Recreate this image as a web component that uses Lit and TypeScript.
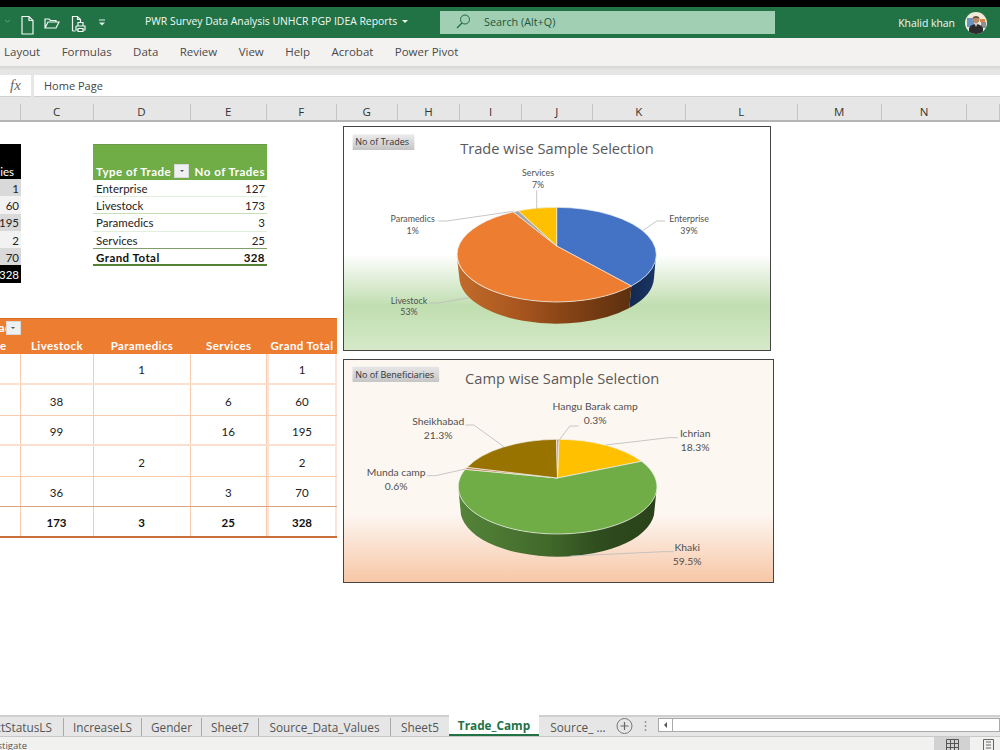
import { LitElement, html, css, svg } from "lit";
import { customElement } from "lit/decorators.js";

type Label = { x: number; l1: number; t1: string; l2: number; t2: string };

const cols: [string, number][] = [
  ["", 20.5], ["C", 73], ["D", 97], ["E", 76.5], ["F", 69.5], ["G", 61.5], ["H", 62], ["I", 62],
  ["J", 70.5], ["K", 93.5], ["L", 111.5], ["M", 84.5], ["N", 85], ["", 33],
];

const black = ["1", "60", "195", "2", "70"];
const trades: [string, string][] = [["Enterprise", "127"], ["Livestock", "173"], ["Paramedics", "3"], ["Services", "25"]];
const cross: string[][] = [
  ["", "", "1", "", "1"],
  ["", "38", "", "6", "60"],
  ["", "99", "", "16", "195"],
  ["", "", "2", "", "2"],
  ["", "36", "", "3", "70"],
];
const rowH = [31, 31, 30, 31, 30];

function labels(list: Label[]) {
  return list.map(
    (l) => svg`<text class="lbl" x=${l.x} y=${l.l1} text-anchor="middle">${l.t1}</text>
      <text class="lbl" x=${l.x} y=${l.l2} text-anchor="middle">${l.t2}</text>`
  );
}

const tradeChart = html`<svg class="chart-svg" viewBox="9 12 1284 675" width="428" height="225">
  <defs>
    <linearGradient id="ow" x1="350" x2="874" y1="0" y2="0" gradientUnits="userSpaceOnUse">
      <stop offset="0" stop-color="#c26c2b"/><stop offset="0.35" stop-color="#a9561f"/>
      <stop offset="0.6" stop-color="#8a4516"/><stop offset="1" stop-color="#5c300f"/>
    </linearGradient>
    <linearGradient id="bw" x1="874" x2="948" y1="0" y2="0" gradientUnits="userSpaceOnUse">
      <stop offset="0" stop-color="#13294f"/><stop offset="1" stop-color="#1a3566"/>
    </linearGradient>
    <linearGradient id="btn1" x1="0" x2="0" y1="0" y2="1">
      <stop offset="0" stop-color="#ececec"/><stop offset="1" stop-color="#c4c4c4"/>
    </linearGradient>
  </defs>
  <path class="wall" fill="url(#bw)" d="M948 398A299 142 0 0 1 874 492L868 558A292 140 0 0 0 942 468Z"/>
  <path class="wall" fill="url(#ow)" d="M874 492A299 142 0 0 1 350 398L358 468A292 140 0 0 0 868 558Z"/>
  <path class="top" fill="#4472c4" d="M650 372L650 256A299 142 0 0 1 874 492Z"/>
  <path class="top" fill="#ed7d31" d="M650 372L874 492A299 142 0 1 1 520 270Z"/>
  <path class="top" fill="#a5a5a5" d="M650 372L520 270A299 142 0 0 1 535 266Z"/>
  <path class="top" fill="#ffc000" d="M650 372L535 266A299 142 0 0 1 650 256Z"/>
  <path class="lead" d="M590 205V262M295 297H320L520 268M975 297H950L910 325M268 543H295L388 527"/>
  ${labels([
    { x: 594, l1: 163, t1: "Services", l2: 198, t2: "7%" },
    { x: 218, l1: 300, t1: "Paramedics", l2: 335, t2: "1%" },
    { x: 1047, l1: 300, t1: "Enterprise", l2: 335, t2: "39%" },
    { x: 207, l1: 545, t1: "Livestock", l2: 580, t2: "53%" },
  ])}
  <text class="ttl" x="651" y="95" text-anchor="middle">Trade wise Sample Selection</text>
  <rect x="38" y="37" width="185" height="47" fill="url(#btn1)"/>
  <text class="btn" x="46" y="70">No of Trades</text>
</svg>`;

const campChart = html`<svg class="chart-svg" viewBox="7.5 12 1293 672" width="431" height="224">
  <defs>
    <linearGradient id="gw" x1="355" x2="950" y1="0" y2="0" gradientUnits="userSpaceOnUse">
      <stop offset="0" stop-color="#55843a"/><stop offset="0.45" stop-color="#41692a"/>
      <stop offset="0.7" stop-color="#2f4d1e"/><stop offset="1" stop-color="#2a4119"/>
    </linearGradient>
    <linearGradient id="btn2" x1="0" x2="0" y1="0" y2="1">
      <stop offset="0" stop-color="#e6e6e6"/><stop offset="1" stop-color="#c6c6c6"/>
    </linearGradient>
  </defs>
  <path class="wall" fill="url(#gw)" d="M949 395A298 142 0 0 1 353 395L360 465A291 140 0 0 0 942 465Z"/>
  <path class="top" fill="#ffc000" d="M651 369L655 253A298 142 0 0 1 903 319Z"/>
  <path class="top" fill="#70ad47" d="M651 369L903 319A298 142 0 1 1 374 343Z"/>
  <path class="top" fill="#c9824a" d="M651 369L374 343A298 142 0 0 1 380 337Z"/>
  <path class="top" fill="#997300" d="M651 369L380 337A298 142 0 0 1 648 253Z"/>
  <path class="top" fill="#d39a62" d="M651 369L648 253L655 253Z"/>
  <path class="lead" d="M715 213H688L654 258M375 210H400L490 275M1012 248H985L795 270M260 362H285L375 342M1000 590H970L690 603"/>
  ${labels([
    { x: 764, l1: 165, t1: "Hangu Barak camp", l2: 206, t2: "0.3%" },
    { x: 293, l1: 209, t1: "Sheikhabad", l2: 251, t2: "21.3%" },
    { x: 1064, l1: 247, t1: "Ichrian", l2: 289, t2: "18.3%" },
    { x: 167, l1: 364, t1: "Munda camp", l2: 404, t2: "0.6%" },
    { x: 1040, l1: 588, t1: "Khaki", l2: 629, t2: "59.5%" },
  ])}
  <text class="ttl" x="665" y="88" text-anchor="middle">Camp wise Sample Selection</text>
  <rect x="36" y="35" width="260" height="46" fill="url(#btn2)"/>
  <text class="btn" x="44" y="68">No of Beneficiaries</text>
</svg>`;

@customElement("app-root")
export class AppRoot extends LitElement {
  static styles = css`
    :host {
      display: flex; flex-direction: column; width: 1000px; height: 750px; overflow: hidden;
      background: #fff; font-family: "Open Sans", sans-serif; color: #444;
    }
    .black-top { height: 7px; background: #000; flex: none; }
    .title {
      height: 31px; flex: none; background: #217346; color: #f4f8f5; display: flex; align-items: center;
      font-size: 10.4px;
    }
    .qat { display: flex; align-items: center; width: 145px; flex: none; height: 100%; }
    .qat svg { display: block; flex: none; }
    .doc-title { width: 295px; flex: none; display: flex; align-items: center; gap: 5px; white-space: nowrap; padding-bottom: 3px; box-sizing: border-box; }
    .caret { width: 0; height: 0; border: 3px solid transparent; border-top-color: #f4f8f5; border-bottom: 0; }
    .search {
      width: 335px; height: 23px; flex: none; background: #a0cfb4; color: #24563a; display: flex; align-items: center;
      margin-top: -1px; font-size: 10.8px; padding-bottom: 1px; box-sizing: border-box;
    }
    .search svg { margin-left: 15px; margin-right: 12px; }
    .user { margin-left: auto; display: flex; align-items: center; gap: 10px; padding-right: 13px; white-space: nowrap; }
    .ribbon {
      height: 28px; flex: none; background: #f3f2f1; display: flex; align-items: center; gap: 21.4px; padding: 0 0 2px 4px; box-sizing: border-box;
      font-size: 11.5px; color: #4a4a4a; white-space: nowrap;
    }
    .band { height: 9px; flex: none; background: linear-gradient(#d5d5d3, #e6e6e6 45%); }
    .formula { height: 22px; flex: none; background: #e6e6e6; display: flex; gap: 3px; }
    .fx {
      width: 31px; background: #fff; border-bottom: 1px solid #d0d0d0; display: flex; align-items: center;
      justify-content: center; font: italic 15px "Liberation Serif", serif; color: #666;
    }
    .finput {
      flex: 1; background: #fff; border-bottom: 1px solid #d0d0d0; font-size: 11px; color: #444;
      display: flex; align-items: center; padding-left: 10px;
    }
    .heads { height: 25px; flex: none; background: #e6e6e6; border-bottom: 2px solid #b5b5b5; display: flex; align-items: flex-end; box-sizing: border-box; }
    .head {
      height: 16px; flex: none; box-sizing: border-box; border-right: 1px solid #c4c4c4; text-align: center;
      font: 11.5px/15px "Open Sans", sans-serif; color: #333;
    }
    .sheet { flex: 1; min-height: 0; display: flex; font-family: "Lato", sans-serif; font-size: 11.5px; color: #222; }
    .left { width: 343px; flex: none; padding-top: 21.5px; box-sizing: border-box; }
    .top-row { display: flex; gap: 72px; height: 174.5px; align-items: flex-start; }

    .bt { width: 21px; flex: none; overflow: hidden; }
    .bt .h { height: 35.5px; background: #000; color: #fff; display: flex; align-items: flex-end; justify-content: flex-end; padding: 0 7px 1px 0; box-sizing: border-box; }
    .bt .r { height: 17.3px; display: flex; justify-content: flex-end; align-items: center; padding: 1px 2px 0 0; box-sizing: border-box; white-space: nowrap; }
    .bt .r:nth-child(even) { background: #d9d9d9; }
    .bt .r:nth-child(odd) { background: #f2f2f2; }
    .bt .r.t { background: #000; color: #fff; }

    .gt { width: 174px; flex: none; }
    .gt .h {
      height: 36px; box-sizing: border-box; background: #70ad47; border-top: 1px solid #6a9a4a; color: #fff; font-weight: 700;
      display: flex; align-items: flex-end; padding: 0 2px 2px 3px; white-space: nowrap; letter-spacing: 0.5px;
    }
    .gt .h span:last-child { margin-left: auto; }
    .fbtn {
      width: 15px; height: 14px; flex: none; margin-left: 3px; background: #eef0f2; border: 1px solid #d8d8d8; box-sizing: border-box;
      display: flex; align-items: center; justify-content: center;
    }
    .fbtn::after { content: ""; border: 2.5px solid transparent; border-top-color: #555; border-bottom: 0; }
    .gt .r {
      height: 17.4px; box-sizing: border-box; display: flex; justify-content: space-between; align-items: center; padding: 1px 2px 0 3px;
      border-bottom: 1px solid #c6e0b4;
    }
    .gt .r:nth-child(even) { border-bottom-color: #e2efda; }
    .gt .r.pre { border-bottom-color: #7f9f6a; }
    .gt .r.t { font-weight: 700; border-bottom: 2px solid #548235; color: #111; letter-spacing: 0.45px; }

    .ot { width: 337px; }
    .ot .hd { background: #ed7d31; border-top: 1px solid #d9702a; height: 36px; box-sizing: border-box; color: #fff; font-weight: 700; letter-spacing: 0.4px; }
    .ot .hd1 { height: 18px; display: flex; justify-content: flex-end; width: 20.5px; overflow: hidden; align-items: flex-start; padding-top: 2px; box-sizing: border-box; }
    .ot .hd1 span { margin-right: -16px; white-space: nowrap; }
    .ot .hd2 { display: grid; grid-template-columns: 20.5px 73px 97px 76.5px 70px; height: 17px; align-items: center; }
    .ot .hd2 span { text-align: center; white-space: nowrap; }
    .ot .hd2 .clip { display: flex; justify-content: flex-end; overflow: hidden; padding-right: 14px; box-sizing: border-box; }
    .ot .row { display: grid; grid-template-columns: 20.5px 73px 97px 76.5px 70px; box-sizing: border-box; border-bottom: 1px solid #f8cbad; }
    .ot .row.thick { border-bottom: 2px solid #fbe0cf; }
    .ot .row.pre { border-bottom: 1px solid #d9a483; }
    .ot .row.t { border-bottom: 2px solid #c9703a; font-weight: 700; color: #111; }
    .ot .c { border-right: 1px solid #f8cbad; display: flex; align-items: center; justify-content: center; box-sizing: border-box; padding-top: 2px; }
    .ot .c:last-child { border-right: 2px solid #fce4d6; border-left: 2px solid #fce4d6; }

    .right { flex: 1; padding-top: 4px; }
    .c1 { width: 428px; height: 225px; background: linear-gradient(#fff 57%, #c0deb0 80%, #d6e9c9 100%); }
    .c2 { width: 431px; height: 224px; margin: 8px 0 0 -0.5px; background: linear-gradient(#fdf7f2 69%, #f7c6a5 100%); }
    .chart-svg { display: block; outline: 1px solid #444; outline-offset: -1px; font-family: "Open Sans", sans-serif; }
    .wall { stroke: none; }
    .top { stroke: #f3f3f3; stroke-width: 2; stroke-linejoin: round; }
    .lead { fill: none; stroke: #bcbcbc; stroke-width: 2.5; }
    .lbl { font-family: "Lato", sans-serif; font-size: 26.5px; fill: #505050; }
    .c2 .lbl { font-size: 31px; }
    .ttl { font-size: 44px; fill: #595959; }
    .btn { font-size: 27px; fill: #333; }

    .tabs {
      height: 22px; flex: none; box-sizing: border-box; background: #e6e6e6; border-top: 2px solid #cfcfcf; border-bottom: 1px solid #c8c8c8;
      display: flex; font-size: 11.8px; color: #555; white-space: nowrap;
    }
    .tab { flex: none; display: flex; align-items: center; box-sizing: border-box; height: 18px; border-right: 1px solid #aaa; justify-content: center; margin-top: 1px; }
    .tab.first { width: 64px; justify-content: flex-end; padding-right: 11px; overflow: hidden; }
    .tab.active {
      background: #fff; color: #217346; font-weight: 700; margin-top: -2px; border: 0; border-bottom: 2px solid #217346; height: 21px;
    }
    .tab.last { border: 0; }
    .tab-tools { display: flex; align-items: center; flex: none; }
    .sbar { flex: 1; height: 14px; margin-top: 1px; background: #fff; border: 1px solid #a9a9a9; box-sizing: border-box; display: flex; }
    .sbar i { width: 13px; border-right: 1px solid #a9a9a9; display: flex; align-items: center; justify-content: center; }
    .sbar i::after { content: ""; border: 3px solid transparent; border-right-color: #555; border-left: 0; }
    .status { height: 13px; flex: none; background: #f1f1f0; display: flex; font-size: 9.5px; color: #555; overflow: hidden; }
    .st-text { width: 27px; display: flex; justify-content: flex-end; line-height: 17px; white-space: nowrap; overflow: hidden; }
    .views { margin-left: auto; display: flex; }
    .view { height: 13px; display: flex; justify-content: center; padding-top: 2px; box-sizing: border-box; }
    .view.on { width: 36px; background: #d2d2d2; margin-right: 9px; margin-left: 1px; }
    .view.off { width: 19px; margin-right: 2px; }
  `;

  render() {
    return html`
      <div class="black-top"></div>
      <div class="title">
        <div class="qat">
          <svg width="21" height="31" viewBox="0 0 21 31"><path d="M5 13l2.500 2 2.500-2" fill="none" stroke="#5f9d7b" stroke-width="1"/></svg>
          <svg width="20" height="31" viewBox="0 0 20 31"><path d="M1 9.500h7l4 4v13.500H1zM8 9.500v4h4" fill="none" stroke="#f2f7f4" stroke-width="1.200"/></svg>
          <svg width="24" height="31" viewBox="0 0 24 31"><path d="M4 21V12h4l1.500 1.500H15V15M4 21h11l3-6H7z" fill="none" stroke="#f2f7f4" stroke-width="1.200"/></svg>
          <svg width="28" height="31" viewBox="0 0 28 31"><path d="M7.500 24V9.500h5l3 3v3M12.500 9.500v3h3M7.500 24h3" fill="none" stroke="#f2f7f4" stroke-width="1.200"/><path d="M11 19h9v4h-2M11 19v4h2M13 19v-3.500h5v3.500M13 21.500h5v3h-5z" fill="none" stroke="#f2f7f4" stroke-width="1.200"/></svg>
          <svg width="20" height="31" viewBox="0 0 20 31"><path d="M6 13h6" stroke="#e2efe8" stroke-width="1"/><path d="M6 15.500h6l-3 3z" fill="#e2efe8"/></svg>
        </div>
        <div class="doc-title">PWR Survey Data Analysis UNHCR PGP IDEA Reports<span class="caret"></span></div>
        <div class="search">
          <svg width="17" height="17" viewBox="0 0 17 17"><circle cx="10" cy="6.500" r="4.500" fill="none" stroke="#1f6b41" stroke-width="1"/><path d="M7 10l-5 5" stroke="#1f6b41" stroke-width="1.300"/></svg>
          Search (Alt+Q)
        </div>
        <div class="user">Khalid khan
          <svg width="22" height="22" viewBox="0 0 22 22">
            <defs><clipPath id="av"><circle cx="11" cy="11" r="11"/></clipPath></defs>
            <g clip-path="url(#av)">
              <rect width="22" height="22" fill="#f2ead8"/>
              <rect x="2" y="6" width="7" height="9" fill="#6a94c4"/>
              <rect x="15" y="7" width="5" height="3" fill="#d9854a"/>
              <rect x="16" y="10" width="5" height="6" fill="#8a9199"/>
              <path d="M4 20v-4c2-3 4-4 7-4s5 1 7 4v4l-3 2H7z" fill="#2b2a2c"/>
              <circle cx="11" cy="7.500" r="3.500" fill="#b58a68"/>
              <path d="M7.500 6.500c.5-3 6.500-3 7 0-2-1-5-1-7 0z" fill="#5a4c40"/>
              <path d="M9 11h4l-2 4z" fill="#c9c3bc"/>
            </g>
          </svg>
        </div>
      </div>
      <div class="ribbon">
        ${["Layout", "Formulas", "Data", "Review", "View", "Help", "Acrobat", "Power Pivot"].map((t) => html`<span>${t}</span>`)}
      </div>
      <div class="band"></div>
      <div class="formula"><div class="fx">fx</div><div class="finput">Home Page</div></div>
      <div class="heads">
        ${cols.map(([c, w]) => html`<div class="head" style="width:${w}px">${c}</div>`)}
      </div>
      <div class="sheet">
        <div class="left">
          <div class="top-row">
            <div class="bt">
              <div class="h"><span>ies</span></div>
              ${black.map((v) => html`<div class="r">${v}</div>`)}
              <div class="r t">328</div>
            </div>
            <div class="gt">
              <div class="h"><span>Type of Trade</span><i class="fbtn"></i><span>No of Trades</span></div>
              ${trades.map(([a, b], i) => html`<div class="r ${i === 3 ? "pre" : ""}"><span>${a}</span><span>${b}</span></div>`)}
              <div class="r t"><span>Grand Total</span><span>328</span></div>
            </div>
          </div>
          <div class="ot">
            <div class="hd">
              <div class="hd1"><span>Trade</span><i class="fbtn"></i></div>
              <div class="hd2">
                <span class="clip"><span>Enterprise</span></span>
                <span>Livestock</span><span>Paramedics</span><span>Services</span><span>Grand Total</span>
              </div>
            </div>
            ${cross.map(
              (r, i) => html`<div class="row ${i === 0 || i === 2 ? "thick" : ""} ${i === 4 ? "pre" : ""}" style="height:${rowH[i]}px">
                ${r.map((v) => html`<div class="c">${v}</div>`)}
              </div>`
            )}
            <div class="row t" style="height:31px">
              ${["", "173", "3", "25", "328"].map((v) => html`<div class="c">${v}</div>`)}
            </div>
          </div>
        </div>
        <div class="right">
          <div class="c1">${tradeChart}</div>
          <div class="c2">${campChart}</div>
        </div>
      </div>
      <div class="tabs">
        <div class="tab first"><span>ActStatusLS</span></div>
        <div class="tab" style="width:78px">IncreaseLS</div>
        <div class="tab" style="width:60px">Gender</div>
        <div class="tab" style="width:57px">Sheet7</div>
        <div class="tab" style="width:132px">Source_Data_Values</div>
        <div class="tab last" style="width:58px">Sheet5</div>
        <div class="tab active" style="width:90px">Trade_Camp</div>
        <div class="tab last" style="width:74px;padding-left:4px">Source_ ...</div>
        <div class="tab-tools">
          <svg width="45" height="19" viewBox="0 0 45 19">
            <circle cx="11.500" cy="9" r="7.500" fill="none" stroke="#777" stroke-width="1"/>
            <path d="M11.500 5v8M7.500 9h8" stroke="#666" stroke-width="1.200"/>
            <path d="M32.500 4v2M32.500 8v2M32.500 12v2" stroke="#999" stroke-width="1.500"/>
          </svg>
        </div>
        <div class="sbar"><i></i></div>
      </div>
      <div class="status">
        <div class="st-text"><span>Investigate</span></div>
        <div class="views">
          <div class="view on"><svg width="13" height="11" viewBox="0 0 13 11"><path d="M.5 .5h12v12H.500zM.5 4.500h12M.5 8.500h12M4.500 .5v12M8.500 .5v12" fill="none" stroke="#555"/></svg></div>
          <div class="view off"><svg width="13" height="11" viewBox="0 0 13 11"><path d="M1.500 .5h10v12h-10zM4 3h5M4 6h5M4 9h5" fill="none" stroke="#666"/></svg></div>
        </div>
      </div>
    `;
  }
}
